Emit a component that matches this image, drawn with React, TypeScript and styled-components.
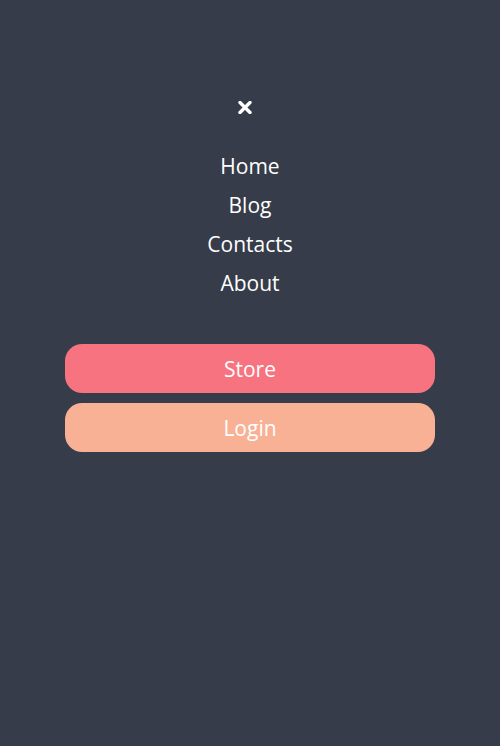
import React from "react";
import styled, { createGlobalStyle } from "styled-components";

const Global = createGlobalStyle`
  html, body { margin: 0; padding: 0; background: #363c49; }
  body { font-family: "Open Sans", "Noto Sans", sans-serif; }
`;

const Page = styled.div`
  width: 500px;
  height: 746px;
  background: #363c49;
  display: flex;
  flex-direction: column;
  align-items: center;
  padding-top: 98px;
  box-sizing: border-box;
`;

const CloseButton = styled.button`
  background: none;
  border: 0;
  padding: 0;
  margin: 0 10px 0 0;
  width: 18px;
  height: 18px;
  display: flex;
  align-items: center;
  justify-content: center;
  cursor: pointer;
`;

const Nav = styled.nav`
  display: flex;
  flex-direction: column;
  align-items: center;
  margin-top: 31px;
`;

const NavLink = styled.a`
  color: #ffffff;
  font-size: 21px;
  line-height: 39px;
  text-decoration: none;
`;

const Actions = styled.div`
  display: flex;
  flex-direction: column;
  gap: 10px;
  width: 370px;
  margin-top: 41px;
`;

const ActionButton = styled.button<{ $bg: string }>`
  height: 49px;
  border: 0;
  border-radius: 17px;
  background: ${(p) => p.$bg};
  color: #ffffff;
  font-family: "Open Sans", "Noto Sans", sans-serif;
  font-size: 21px;
  cursor: pointer;
`;

export default function App() {
  return (
    <>
      <Global />
      <Page>
        <CloseButton aria-label="Close">
          <svg width="14" height="13" viewBox="0 0 14 13">
            <path d="M2 1.5 L12 11.5 M12 1.5 L2 11.5" stroke="#fff" strokeWidth="3.4" strokeLinecap="round" />
          </svg>
        </CloseButton>
        <Nav>
          <NavLink href="#">Home</NavLink>
          <NavLink href="#">Blog</NavLink>
          <NavLink href="#">Contacts</NavLink>
          <NavLink href="#">About</NavLink>
        </Nav>
        <Actions>
          <ActionButton $bg="#f7737f">Store</ActionButton>
          <ActionButton $bg="#f8b195">Login</ActionButton>
        </Actions>
      </Page>
    </>
  );
}
